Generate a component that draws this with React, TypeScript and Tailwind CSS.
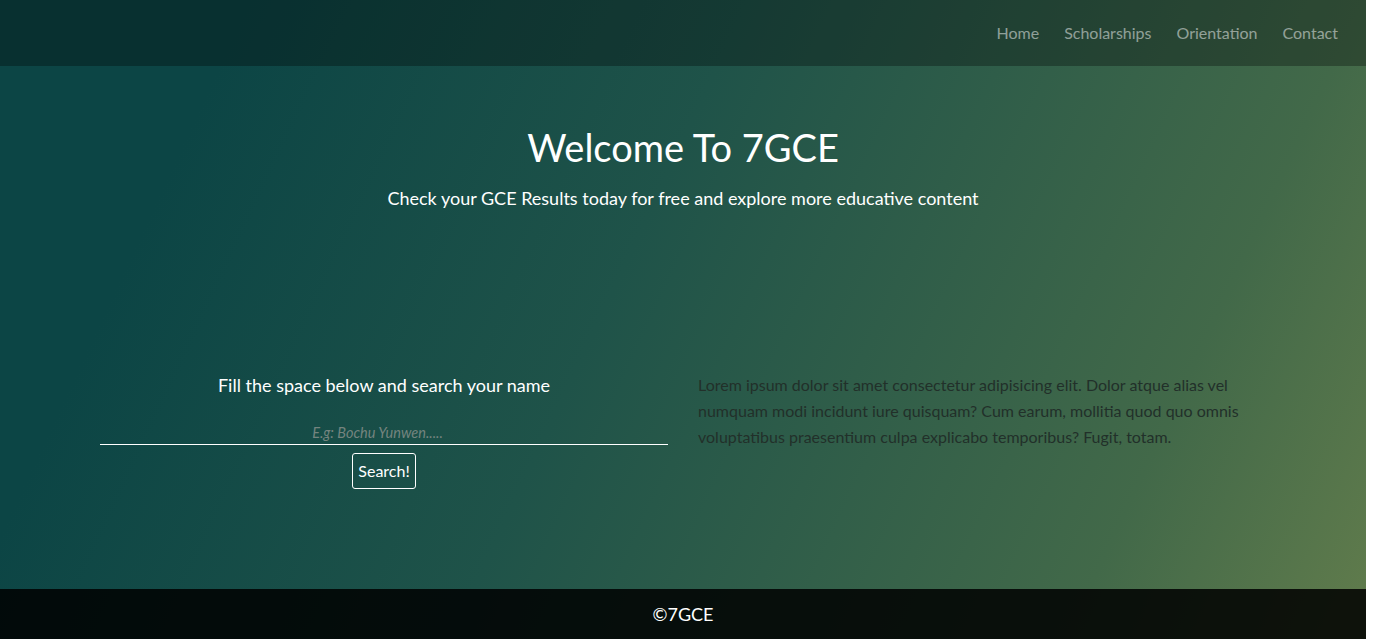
const links = ['Home', 'Scholarships', 'Orientation', 'Contact'];

const App = () => {
    return (
        <div className="flex w-full bg-white font-['Lato','Open_Sans',sans-serif]">
            <div className="flex h-[639px] w-[1366px] shrink-0 flex-col bg-[linear-gradient(115deg,#0c4545_15%,#1f5349_45%,#426949_82%,#617c4c_100%)]">
                {/* navbar */}
                <nav className="flex h-[66px] shrink-0 items-center justify-end gap-[25px] bg-black/30 pr-7">
                    {links.map((l) => (
                        <a key={l} href="#" className="text-base text-white/50">
                            {l}
                        </a>
                    ))}
                </nav>

                {/* hero */}
                <header className="mt-[58px] text-center text-white">
                    <h1 className="text-[38px] leading-[46px]">Welcome To 7GCE</h1>
                    <p className="mt-[15px] text-lg leading-[27px]">
                        Check your GCE Results today for free and explore more educative content
                    </p>
                </header>

                {/* search + text */}
                <section className="mt-[160px] flex flex-1 gap-[30px] pl-[100px]">
                    <div className="flex w-[568px] flex-col items-center">
                        <h2 className="text-lg leading-[27px] text-white">Fill the space below and search your name</h2>
                        <input
                            type="text"
                            placeholder="E.g: Bochu Yunwen....."
                            className="mt-[21px] h-[25px] w-full border-b border-white bg-transparent pr-[13px] text-center text-[14.5px] text-white italic outline-none placeholder:text-[#74847f]"
                        />
                        <button className="mt-[8px] rounded-[3px] border border-white px-[5px] py-[5px] text-base leading-6 text-white">
                            Search!
                        </button>
                    </div>
                    <p className="w-[560px] text-base leading-[26px] text-[#22302a]">
                        Lorem ipsum dolor sit amet consectetur adipisicing elit. Dolor atque alias vel numquam modi
                        incidunt iure quisquam? Cum earum, mollitia quod quo omnis voluptatibus praesentium culpa
                        explicabo temporibus? Fugit, totam.
                    </p>
                </section>

                {/* footer */}
                <footer className="flex h-[50px] shrink-0 items-center justify-center bg-black/85 text-lg text-white">
                    ©7GCE
                </footer>
            </div>
        </div>
    );
};

export default App;
